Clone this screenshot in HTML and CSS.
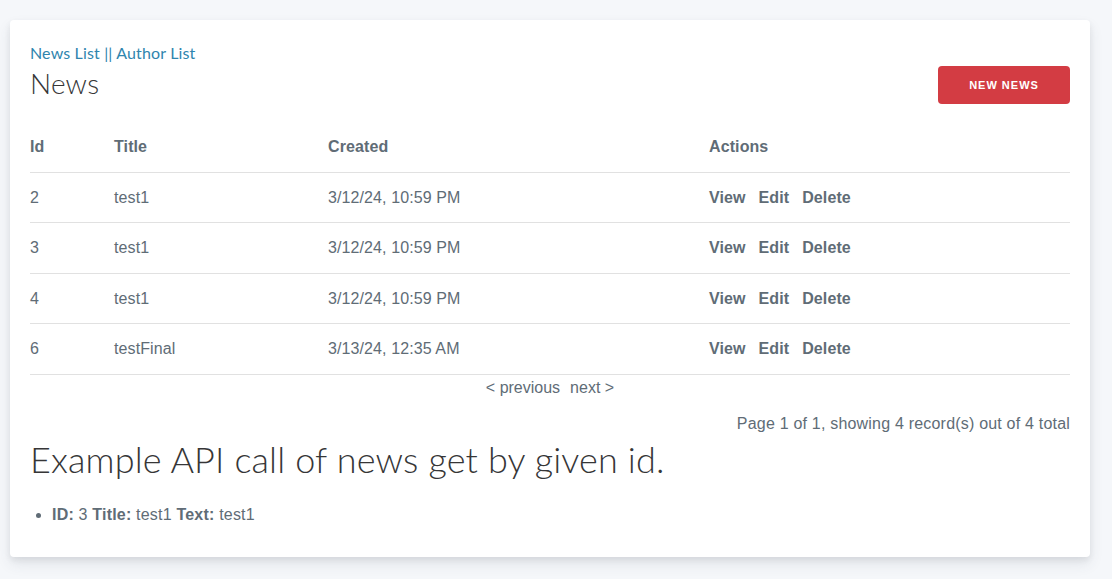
FILE: index.html
```html
<!DOCTYPE html>
<html>
<head>
<meta charset="utf-8">
<link rel="stylesheet" href="styles.css">
</head>
<body>
<main class="card">
  <nav class="top-nav"><a href="#">News List</a> || <a href="#">Author List</a></nav>
  <div class="head-row">
    <h3 class="title">News</h3>
    <a class="button" href="#">New News</a>
  </div>
  <table class="grid">
    <colgroup>
      <col class="c-id"><col class="c-title"><col class="c-created"><col class="c-actions">
    </colgroup>
    <thead>
      <tr><th>Id</th><th>Title</th><th>Created</th><th>Actions</th></tr>
    </thead>
    <tbody>
      <tr><td>2</td><td>test1</td><td>3/12/24, 10:59 PM</td><td class="actions"><a href="#">View</a><a href="#">Edit</a><a href="#">Delete</a></td></tr>
      <tr><td>3</td><td>test1</td><td>3/12/24, 10:59 PM</td><td class="actions"><a href="#">View</a><a href="#">Edit</a><a href="#">Delete</a></td></tr>
      <tr><td>4</td><td>test1</td><td>3/12/24, 10:59 PM</td><td class="actions"><a href="#">View</a><a href="#">Edit</a><a href="#">Delete</a></td></tr>
      <tr><td>6</td><td>testFinal</td><td>3/13/24, 12:35 AM</td><td class="actions"><a href="#">View</a><a href="#">Edit</a><a href="#">Delete</a></td></tr>
    </tbody>
  </table>
  <ul class="pagination">
    <li>&lt; previous</li>
    <li>next &gt;</li>
  </ul>
  <p class="counter">Page <span class="hl">1</span> of <span class="hl">1</span>, showing 4 record(s) out of 4 total</p>
  <h2 class="api-title">Example API call of news get by given id.</h2>
  <ul class="api-list">
    <li><b>ID:</b> 3 <b>Title:</b> test1 <b>Text:</b> test1</li>
  </ul>
</main>
</body>
</html>
```
FILE: styles.css
```css
html, body {
  margin: 0;
  padding: 0;
}
body {
  background: #f5f7fa;
  font-family: "Liberation Sans", Arial, sans-serif;
  font-size: 16px;
  line-height: 1.6;
  color: #606c76;
  padding: 20px 22px 23px 10px;
}
.card {
  display: block;
  background: #fff;
  border-radius: 4px;
  padding: 20px 20px 20px 20px;
  box-shadow: 0 7px 14px 0 rgba(60, 66, 87, 0.1), 0 3px 6px 0 rgba(0, 0, 0, 0.07);
}
a {
  color: #2f85ae;
  text-decoration: none;
}
.top-nav {
  font-family: Lato, "Liberation Sans", sans-serif;
  font-size: 16px;
  height: 25px;
  color: #2f85ae;
  letter-spacing: 0.15px;
}
.head-row {
  display: flex;
  justify-content: space-between;
  align-items: flex-start;
  margin-bottom: 18px;
}
.title {
  margin: 0;
  font-family: Lato, "Liberation Sans", sans-serif;
  font-weight: 300;
  font-size: 28px;
  line-height: 36.4px;
  color: #363637;
  letter-spacing: 0.2px;
}
.button {
  margin-top: 1px;
  display: inline-block;
  width: 132px;
  height: 38px;
  line-height: 38px;
  text-align: center;
  background: #d33c43;
  color: #fff;
  border-radius: 4px;
  font-size: 11px;
  font-weight: 700;
  letter-spacing: 1px;
  text-transform: uppercase;
}
.grid {
  width: 100%;
  border-collapse: collapse;
  table-layout: fixed;
  letter-spacing: 0.1px;
}
.c-id { width: 69px; }
.c-title { width: 214px; }
.c-created { width: 381px; }
.grid th, .grid td {
  text-align: left;
  padding: 12px 15px;
  border-bottom: 1px solid #e1e1e1;
  line-height: 25.6px;
}
.grid th:first-child, .grid td:first-child { padding-left: 0; }
.grid th:last-child, .grid td:last-child { padding-right: 0; }
.grid th {
  font-weight: 700;
  color: #606c76;
}
.actions a {
  color: #606c76;
  font-weight: 700;
  margin-right: 13px;
}
.pagination {
  list-style: none;
  margin: 0;
  padding: 0;
  display: flex;
  justify-content: center;
  gap: 10px;
  height: 26px;
  line-height: 26px;
  color: #606c76;
}
.counter {
  margin: 10px 0 0;
  text-align: right;
  line-height: 26px;
  letter-spacing: 0.2px;
}
.api-title {
  margin: 0 0 20px;
  font-family: Lato, "Liberation Sans", sans-serif;
  font-weight: 300;
  font-size: 36px;
  line-height: 45px;
  color: #363637;
  letter-spacing: 0.13px;
}
.api-list {
  margin: 0 0 9px;
  padding-left: 22px;
  line-height: 26px;
  letter-spacing: 0.2px;
}
.api-list b { color: #606c76; }
```
